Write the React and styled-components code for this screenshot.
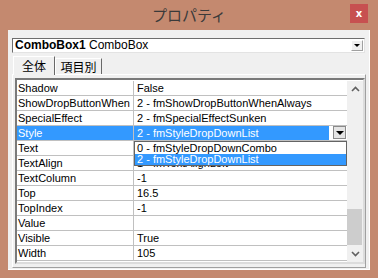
import React from "react";
import styled, { createGlobalStyle } from "styled-components";

const GlobalStyle = createGlobalStyle`
  body {
    margin: 0;
    font-family: "Liberation Sans", "Noto Sans CJK JP", sans-serif;
  }
`;

const rows = [
  ["Shadow", "False"],
  ["ShowDropButtonWhen", "2 - fmShowDropButtonWhenAlways"],
  ["SpecialEffect", "2 - fmSpecialEffectSunken"],
  ["Style", "2 - fmStyleDropDownList", true],
  ["Text", ""],
  ["TextAlign", "1 - fmTextAlignLeft"],
  ["TextColumn", "-1"],
  ["Top", "16.5"],
  ["TopIndex", "-1"],
  ["Value", ""],
  ["Visible", "True"],
  ["Width", "105"],
];

const options = ["0 - fmStyleDropDownCombo", "2 - fmStyleDropDownList"];

function App() {
  return (
    <>
      <GlobalStyle />
      <Window>
        <TitleBar>
          <span />
          <Title>プロパティ</Title>
          <Close>x</Close>
        </TitleBar>
        <Client>
          <Combo>
            <ComboText>
              <b>ComboBox1</b> ComboBox
            </ComboText>
            <DropButton>
              <Arrow />
            </DropButton>
          </Combo>
          <Tabs>
            <Tab active>全体</Tab>
            <Tab>項目別</Tab>
          </Tabs>
          <Panel>
            <Grid>
              <List>
                {rows.map(([name, value, selected]) => (
                  <Row key={name}>
                    <NameCell selected={selected}>{name}</NameCell>
                    <ValueCell selected={selected}>
                      <ValueText selected={selected}>{value}</ValueText>
                      {selected && (
                        <CellButton>
                          <Arrow />
                        </CellButton>
                      )}
                    </ValueCell>
                  </Row>
                ))}
                <DropList>
                  {options.map((o, i) => (
                    <Option key={o} selected={i === 1}>
                      {o}
                    </Option>
                  ))}
                </DropList>
              </List>
              <ScrollBar>
                <ScrollArrow>
                  <svg width="9" height="6" viewBox="0 0 9 6">
                    <path d="M1 5 L4.5 1.5 L8 5" stroke="#606060" strokeWidth="1.6" fill="none" />
                  </svg>
                </ScrollArrow>
                <Track>
                  <Thumb />
                </Track>
                <ScrollArrow>
                  <svg width="9" height="6" viewBox="0 0 9 6">
                    <path d="M1 1 L4.5 4.5 L8 1" stroke="#606060" strokeWidth="1.6" fill="none" />
                  </svg>
                </ScrollArrow>
              </ScrollBar>
            </Grid>
          </Panel>
        </Client>
      </Window>
    </>
  );
}

export default App;

const Window = styled.div`
  width: 378px;
  height: 278px;
  background: #c4896f;
  display: flex;
  flex-direction: column;
`;

const TitleBar = styled.div`
  height: 30px;
  display: grid;
  grid-template-columns: 1fr auto 1fr;
  align-items: center;
`;

const Title = styled.div`
  font-family: "Noto Sans CJK JP", sans-serif;
  font-size: 15px;
  color: #3a3a3a;
  margin-top: -1px;
`;

const Close = styled.div`
  justify-self: end;
  margin-right: 10px;
  margin-top: -4px;
  width: 18px;
  height: 19px;
  background: #c75050;
  color: #fff;
  font-family: "DejaVu Sans", sans-serif;
  font-weight: bold;
  font-size: 10px;
  display: flex;
  align-items: center;
  justify-content: center;
`;

const Client = styled.div`
  margin: 0 8px;
  height: 240px;
  box-sizing: border-box;
  background: #f0f0f0;
  border-right: 1px solid #fff;
  border-bottom: 1px solid #fff;
  padding: 8px 4px 0 4px;
  display: flex;
  flex-direction: column;
`;

const Combo = styled.div`
  height: 15px;
  box-sizing: border-box;
  width: 353px;
  background: #fff;
  border-top: 1px solid #6d6d6d;
  border-left: 1px solid #6d6d6d;
  border-right: 1px solid #e3e3e3;
  border-bottom: 1px solid #e3e3e3;
  display: flex;
  align-items: center;
  padding-left: 2px;
`;

const ComboText = styled.div`
  flex: 1;
  font-size: 12px;
  line-height: 13px;
  color: #000;
  b {
    font-weight: bold;
  }
`;

const DropButton = styled.div`
  width: 12px;
  height: 11px;
  margin-right: 1px;
  box-sizing: border-box;
  background: #f0f0f0;
  border: 1px solid #a0a0a0;
  border-top-color: #fff;
  border-left-color: #fff;
  display: flex;
  align-items: center;
  justify-content: center;
`;

const Arrow = styled.div`
  width: 0;
  height: 0;
  border-left: 3px solid transparent;
  border-right: 3px solid transparent;
  border-top: 3px solid #000;
`;

const Tabs = styled.div`
  display: flex;
  align-items: flex-end;
  margin-top: 3px;
  height: 18px;
  padding-left: 1px;
  position: relative;
  z-index: 1;
`;

const Tab = styled.div`
  font-family: "Noto Sans CJK JP", sans-serif;
  font-size: 12px;
  color: #000;
  box-sizing: border-box;
  height: ${(p) => (p.active ? "19px" : "16px")};
  width: ${(p) => (p.active ? "42px" : "47px")};
  margin-bottom: ${(p) => (p.active ? "-1px" : "0")};
  background: #f0f0f0;
  border-top: 1px solid #fff;
  border-left: 1px solid #fff;
  border-right: 1px solid #696969;
  display: flex;
  align-items: center;
  justify-content: center;
  line-height: 1;
`;

const Panel = styled.div`
  width: 354px;
  height: 194px;
  box-sizing: border-box;
  border-top: 1px solid #fff;
  border-left: 1px solid #fff;
  border-right: 1px solid #a0a0a0;
  border-bottom: 1px solid #a0a0a0;
  padding: 3px 0 0 2px;
`;

const Grid = styled.div`
  width: 350px;
  height: 186px;
  box-sizing: border-box;
  border-top: 2px solid #7a7a7a;
  border-left: 2px solid #7a7a7a;
  border-right: 2px solid #dcdcdc;
  border-bottom: 2px solid #dcdcdc;
  background: #fff;
  display: flex;
  padding-top: 1px;
`;

const List = styled.div`
  flex: 1;
  position: relative;
`;

const Row = styled.div`
  display: grid;
  grid-template-columns: 117px 1fr;
  height: 15px;
  box-sizing: border-box;
  border-bottom: 1px solid #c0c0c0;
  font-size: 11px;
  line-height: 14px;
  color: #000;
`;

const NameCell = styled.div`
  border-right: 1px solid #c0c0c0;
  padding-left: 1px;
  background: ${(p) => (p.selected ? "#3399ff" : "transparent")};
  color: ${(p) => (p.selected ? "#fff" : "#000")};
  white-space: nowrap;
  overflow: hidden;
`;

const ValueCell = styled.div`
  display: flex;
  padding-left: 3px;
  white-space: nowrap;
  overflow: hidden;
`;

const ValueText = styled.span`
  flex: 1;
  ${(p) =>
    p.selected &&
    `
    flex: 0 0 auto;
    background: #3399ff;
    color: #fff;
    margin-left: -3px;
    padding-left: 3px;
    width: 195px;
    box-sizing: border-box;
  `}
`;

const CellButton = styled.div`
  width: 13px;
  height: 13px;
  margin-left: auto;
  margin-right: 1px;
  box-sizing: border-box;
  background: #e5e5e5;
  border: 1px solid #8a8a8a;
  display: flex;
  align-items: center;
  justify-content: center;
  div {
    border-left-width: 4px;
    border-right-width: 4px;
    border-top-width: 4px;
  }
`;

const DropList = styled.div`
  position: absolute;
  left: 117px;
  top: 60px;
  width: 213px;
  height: 25px;
  box-sizing: border-box;
  background: #fff;
  border: 1px solid #646464;
  padding-top: 1px;
`;

const Option = styled.div`
  height: 11px;
  font-size: 11px;
  line-height: 11px;
  padding-left: 2px;
  background: ${(p) => (p.selected ? "#3399ff" : "#fff")};
  color: ${(p) => (p.selected ? "#fff" : "#000")};
`;

const ScrollBar = styled.div`
  width: 16px;
  background: #f0f0f0;
  display: flex;
  flex-direction: column;
`;

const ScrollArrow = styled.div`
  height: 16px;
  display: flex;
  align-items: center;
  justify-content: center;
`;

const Track = styled.div`
  flex: 1;
  position: relative;
`;

const Thumb = styled.div`
  position: absolute;
  left: 0;
  right: 1px;
  top: 112px;
  height: 36px;
  background: #cdcdcd;
`;
